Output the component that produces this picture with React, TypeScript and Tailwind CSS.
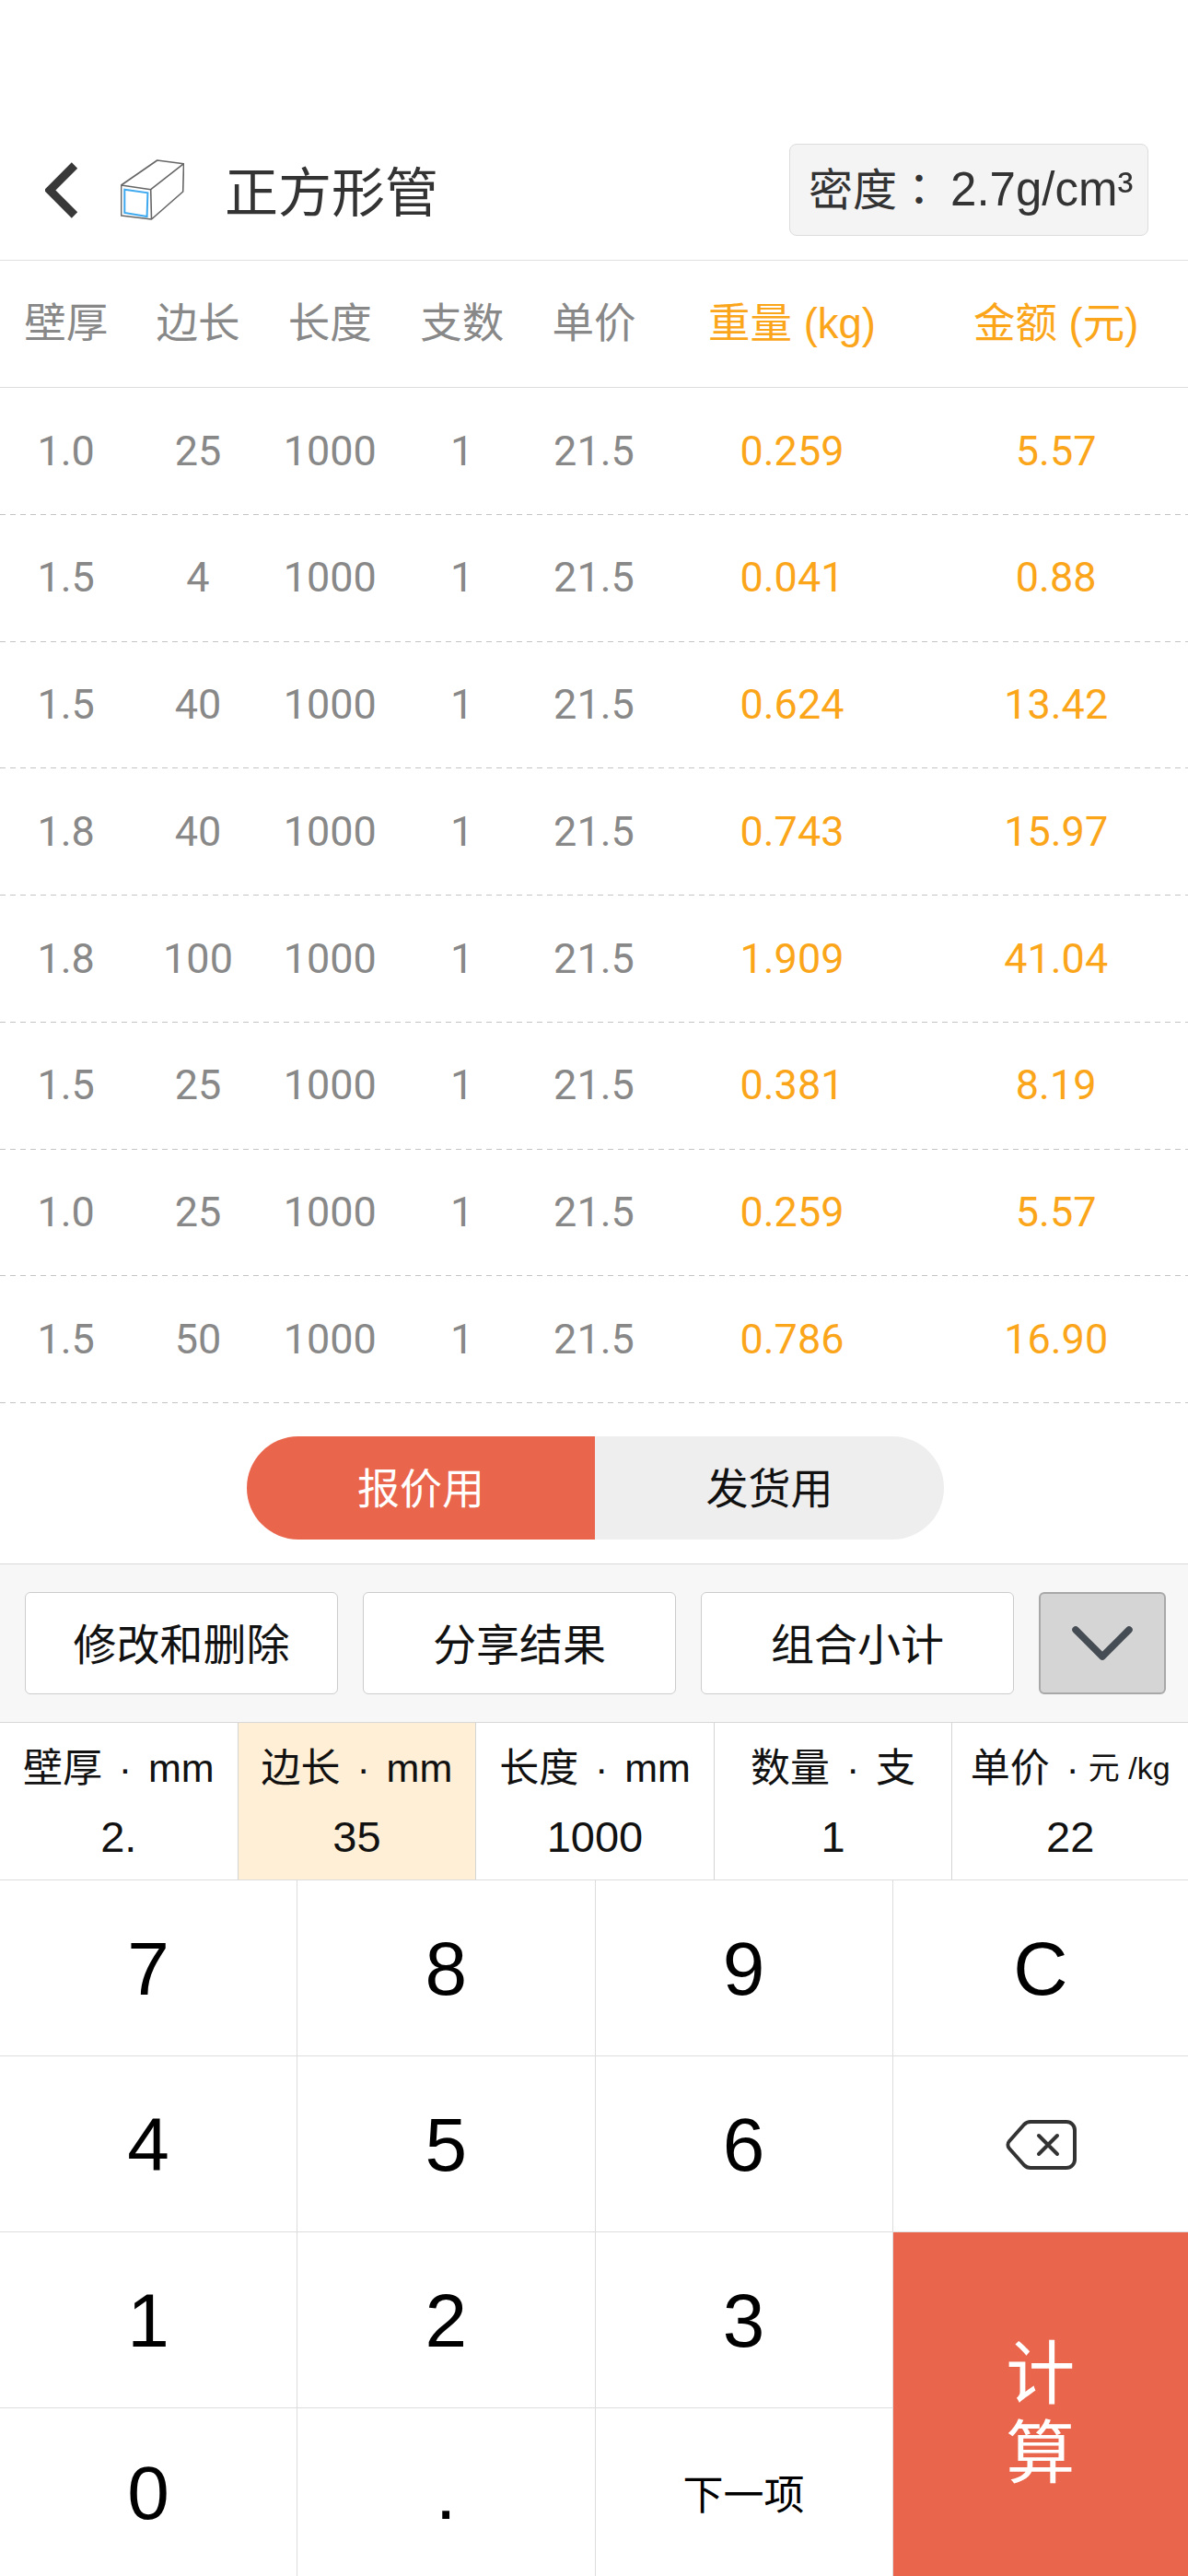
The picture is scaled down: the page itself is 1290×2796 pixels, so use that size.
import React from 'react';

const FONT = "font-['Liberation_Sans','Noto_Sans_CJK_SC',sans-serif]";

const ROWS = [
  ['1.0', '25', '1000', '1', '21.5', '0.259', '5.57'],
  ['1.5', '4', '1000', '1', '21.5', '0.041', '0.88'],
  ['1.5', '40', '1000', '1', '21.5', '0.624', '13.42'],
  ['1.8', '40', '1000', '1', '21.5', '0.743', '15.97'],
  ['1.8', '100', '1000', '1', '21.5', '1.909', '41.04'],
  ['1.5', '25', '1000', '1', '21.5', '0.381', '8.19'],
  ['1.0', '25', '1000', '1', '21.5', '0.259', '5.57'],
  ['1.5', '50', '1000', '1', '21.5', '0.786', '16.90'],
];

const HEAD = ['壁厚', '边长', '长度', '支数', '单价'];

const TubeIcon = () => (
  <svg width="69" height="66" viewBox="0 0 69 66" fill="none" className="ml-[46px] mt-[-1px]">
    <path d="M0.6 28 L32.7 32.7 L33.5 65 L0.6 61 Z M0.6 28 L39.7 1 L68.5 4.7 L32.7 32.7 M68.5 4.7 L67.7 35 L33.5 65" stroke="#666" strokeWidth="1.6" strokeLinejoin="round" />
    <path d="M4.3 32.7 L29.4 36.3 L28.6 62 L4.3 58 Z" stroke="#3ea9ef" strokeWidth="2" />
  </svg>
);

const Field = ({ label, unit, value, active, last }: { label: string; unit: React.ReactNode; value: string; active?: boolean; last?: boolean }) => (
  <div className={`flex flex-col items-center ${last ? 'flex-1' : 'w-[258.6px] border-r border-[#d4d4d4]'} ${active ? 'bg-[#ffefd6]' : ''}`}>
    <div className="h-[48px] mt-[25px] flex items-center text-[43px] leading-[48px] text-[#111] whitespace-nowrap">
      {label}
      <span className="w-[50px] text-center">·</span>
      {unit}
    </div>
    <div className="mt-[27px] text-[47px] leading-[48px] text-[#111]">{value}</div>
  </div>
);

const Key = ({ children, className = '' }: { children: React.ReactNode; className?: string }) => (
  <div className={`flex items-center justify-center border-b border-r border-[#dddddd] text-[82px] text-black ${className}`}>{children}</div>
);

export default function App() {
  return (
    <div className={`w-[1290px] h-[2796px] overflow-hidden bg-white flex flex-col ${FONT}`}>
      {/* Header */}
      <div className="h-[283px] flex items-end border-b border-[#e0e0e0] pb-[26px] shrink-0">
        <div className="flex items-center h-[100px] w-full">
          <svg width="36" height="61" viewBox="0 0 36 61" fill="none" className="ml-[49px]">
            <path d="M32 3.5 L5 30.5 L32 57.5" stroke="#383838" strokeWidth="9" />
          </svg>
          <TubeIcon />
          <div className="ml-[44px] pt-[7px] text-[58px] text-[#333] leading-none">正方形管</div>
          <div className="ml-auto mr-[43px] w-[390px] h-[100px] flex items-center pl-[20px] bg-[#f4f4f4] border border-[#dcdcdc] rounded-[8px] text-[#333] text-[48px] whitespace-nowrap">
            <span className="font-['Liberation_Sans','Noto_Sans_CJK_TC',sans-serif] pt-[2px]">密度：</span>
            <span className="ml-[10px] text-[51px]">2.7g/cm³</span>
          </div>
        </div>
      </div>

      {/* Table */}
      <div className="grid grid-cols-9 h-[138px] items-center border-b border-[#dedede] text-[45.5px] text-center text-[#888] pt-[2px] shrink-0">
        {HEAD.map((h) => <div key={h}>{h}</div>)}
        <div className="col-span-2 text-[#fba61a]">重量 (kg)</div>
        <div className="col-span-2 text-[#fba61a]">金额 (元)</div>
      </div>
      {ROWS.map((r, i) => (
        <div key={i} className="shrink-0">
          <div className="grid grid-cols-9 h-[136.75px] items-center text-[45px] text-center text-[#888] font-['Roboto',sans-serif]">
            {r.slice(0, 5).map((v, j) => <div key={j}>{v}</div>)}
            <div className="col-span-2 text-[#fba61a]">{r[5]}</div>
            <div className="col-span-2 text-[#fba61a]">{r[6]}</div>
          </div>
          <div className="h-px bg-[repeating-linear-gradient(90deg,#c4c4c4_0,#c4c4c4_6px,transparent_6px,transparent_11px)]" />
        </div>
      ))}

      {/* Toggle */}
      <div className="h-[174px] flex justify-center pt-[36px] pl-[3px] shrink-0">
        <div className="flex h-[112px] w-[757px] text-[46px]">
          <div className="w-[378px] bg-[#e9654b] text-white rounded-l-[56px] flex items-center justify-center pt-[2px]">报价用</div>
          <div className="w-[379px] bg-[#eeeeee] text-[#111] rounded-r-[56px] flex items-center justify-center pt-[2px]">发货用</div>
        </div>
      </div>

      {/* Toolbar */}
      <div className="h-[173px] flex items-center gap-[27px] pl-[27px] bg-[#f7f7f7] border-y border-[#d8d8d8] shrink-0">
        {['修改和删除', '分享结果', '组合小计'].map((t) => (
          <div key={t} className="w-[340px] h-[111px] flex items-center justify-center pt-[5px] bg-white border border-[#cccccc] rounded-[6px] text-[47px] text-[#111]">{t}</div>
        ))}
        <div className="w-[138px] h-[111px] flex items-center justify-center bg-[#d5d5d5] border-2 border-[#a8a8a8] rounded-[6px]">
          <svg width="66" height="38" viewBox="0 0 66 38" fill="none">
            <path d="M4 4 L33 33 L62 4" stroke="#454c54" strokeWidth="7.5" strokeLinecap="round" strokeLinejoin="round" />
          </svg>
        </div>
      </div>

      {/* Input fields */}
      <div className="h-[171px] flex border-b border-[#dcdcdc] shrink-0">
        <Field label="壁厚" unit="mm" value="2." />
        <Field label="边长" unit="mm" value="35" active />
        <Field label="长度" unit="mm" value="1000" />
        <Field label="数量" unit="支" value="1" />
        <Field label="单价" unit={<span className="text-[34px] ml-[-8px]">元 /kg</span>} value="22" last />
      </div>

      {/* Keypad */}
      <div className="grid grid-cols-[323px_323.5px_323px_1fr] grid-rows-[191px_191px_191px_182px] shrink-0">
        <Key>7</Key>
        <Key>8</Key>
        <Key>9</Key>
        <Key className="border-r-0">C</Key>
        <Key>4</Key>
        <Key>5</Key>
        <Key>6</Key>
        <Key className="border-r-0">
          <svg width="78" height="56" viewBox="0 0 78 56" fill="none" className="ml-[3px] mt-[2px]">
            <path d="M27 3 H66 a9 9 0 0 1 9 9 V44 a9 9 0 0 1 -9 9 H27 a10 10 0 0 1 -7 -3 L4 32 a6 6 0 0 1 0 -8 L20 6 a10 10 0 0 1 7 -3 Z" stroke="#333" strokeWidth="4" strokeLinejoin="round" />
            <path d="M36 18 L56 38 M56 18 L36 38" stroke="#333" strokeWidth="4" strokeLinecap="round" />
          </svg>
        </Key>
        <Key>1</Key>
        <Key>2</Key>
        <Key>3</Key>
        <div className="row-span-2 bg-[#e9654b] text-white text-[75px] leading-[86px] pt-[20px] flex flex-col items-center justify-center">
          <span>计</span>
          <span>算</span>
        </div>
        <Key className="border-b-0">0</Key>
        <Key className="border-b-0">.</Key>
        <Key className="border-b-0"><span className="text-[44px] pt-[8px]">下一项</span></Key>
      </div>
    </div>
  );
}
